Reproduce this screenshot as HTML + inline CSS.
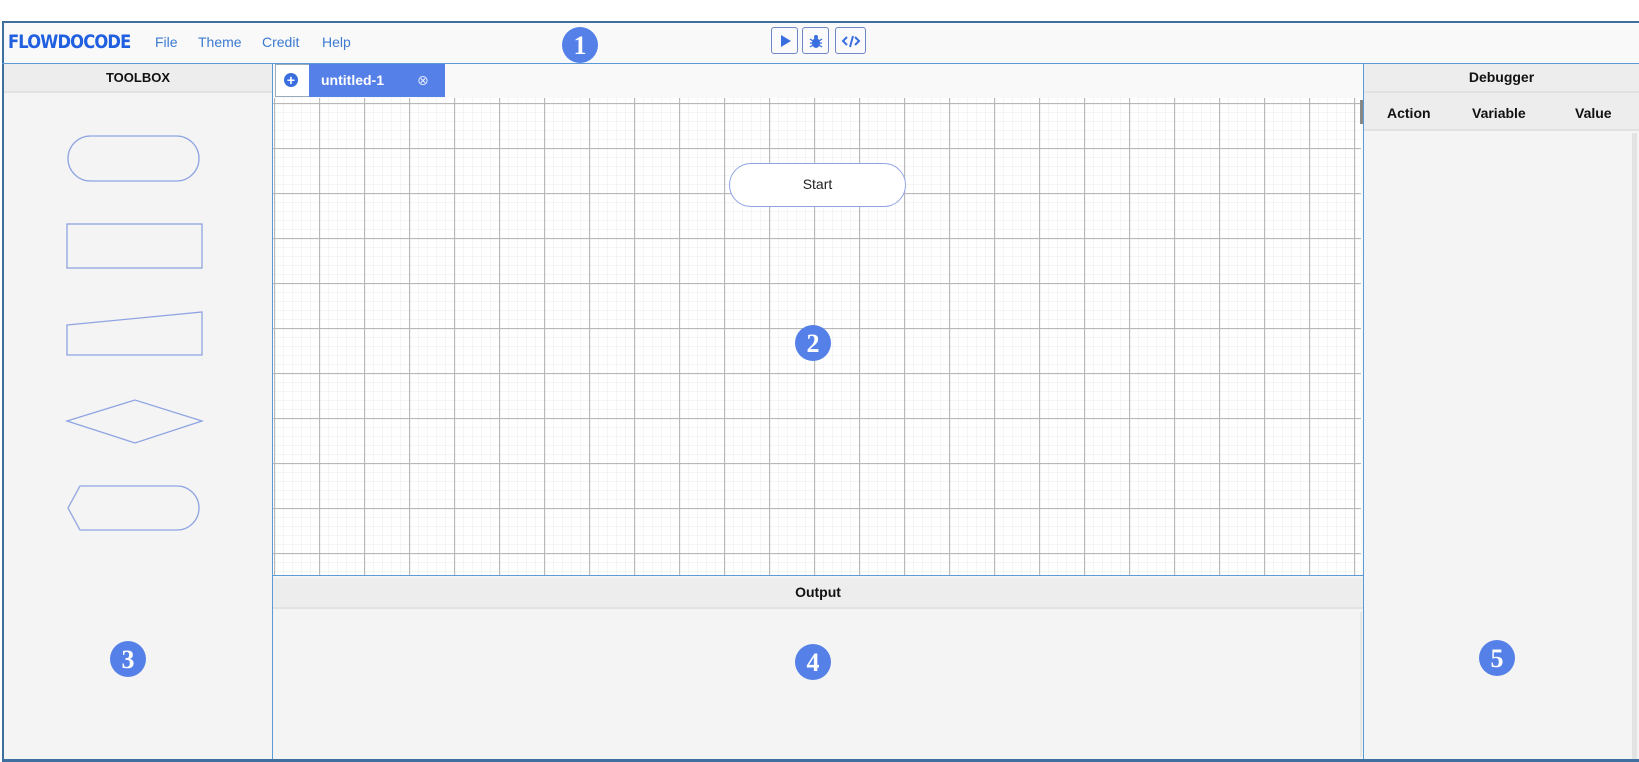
<!DOCTYPE html>
<html><head><meta charset="utf-8"><style>
*{margin:0;padding:0;box-sizing:border-box}
body{width:1639px;height:762px;background:#fff;position:relative;overflow:hidden;font-family:"Liberation Sans","DejaVu Sans",sans-serif}
.a{position:absolute}
.frame{left:2px;top:21px;width:1637px;height:741px;border:2px solid #3f6f9f;border-right:none;background:#f9f9f9}
.menu{top:34px;font-size:14px;color:#3b7bd0}
.hdr{background:#ededed;font-weight:bold;font-size:13px;color:#111;text-align:center;border-bottom:2px solid #e2e2e2}
.btn{top:27px;width:27px;height:27px;border:1px solid #6f86c9;border-radius:3px;background:#fafafa}
.badge{width:36px;height:36px;border-radius:50%;background:#5580e8;color:#fff;font:bold 26px "Liberation Serif",serif;text-align:center;line-height:37px}
</style></head><body>
<div class="a frame"></div>
<div class="a" style="left:8px;top:31px;font:900 19px 'DejaVu Sans',sans-serif;color:#1f5fe0;letter-spacing:-1px;transform:scaleX(0.86);transform-origin:left">FLOWDOCODE</div>
<div class="a menu" style="left:155px">File</div>
<div class="a menu" style="left:198px">Theme</div>
<div class="a menu" style="left:262px">Credit</div>
<div class="a menu" style="left:322px">Help</div>
<div class="a badge" style="left:562px;top:27px">1</div>
<div class="a btn" style="left:771px"><svg width="27" height="27"><path d="M9 7 L19 13 L9 19Z" fill="#3b6fe0"/></svg></div>
<div class="a btn" style="left:802px"><svg width="27" height="27"><g fill="#3b6fe0"><ellipse cx="13" cy="15" rx="4" ry="5"/><circle cx="13" cy="9" r="2"/></g><path d="M7 11l3 2M19 11l-3 2M7 15h3M19 15h-3M7 19l3-2M19 19l-3-2" stroke="#3b6fe0" stroke-width="1.3"/></svg></div>
<div class="a btn" style="left:835px;width:31px"><svg width="31" height="27"><path d="M11 9l-4 4 4 4M19 9l4 4-4 4M17 8l-3 11" stroke="#3b6fe0" stroke-width="2" fill="none"/></svg></div>
<div class="a" style="left:2px;top:63px;width:1637px;height:1px;background:#5b9bd5"></div>
<div class="a" style="left:4px;top:64px;width:268px;height:695px;background:#f4f4f4"></div>
<div class="a hdr" style="left:4px;top:64px;width:268px;height:29px;line-height:27px">TOOLBOX</div>
<div class="a" style="left:272px;top:64px;width:1px;height:698px;background:#5b9bd5"></div>
<svg class="a" style="left:60px;top:130px" width="150" height="410" fill="none" stroke="#8fa4e2" stroke-width="1.3">
<rect x="8" y="6" width="131" height="45" rx="22.5"/>
<rect x="7" y="94" width="135" height="44"/>
<path d="M7 195 L142 182 L142 225 L7 225Z"/>
<path d="M7 291 L75 270 L142 291 L75 313Z"/>
<path d="M20 356 L117 356 A22 22 0 0 1 117 400 L20 400 L8 378Z"/>
</svg>
<div class="a badge" style="left:110px;top:641px">3</div>
<div class="a" style="left:273px;top:64px;width:1090px;height:34px;background:#f9f9f9"></div>
<div class="a" style="left:275px;top:64px;width:35px;height:33px;background:#fff;border:1px solid #9ab;border-right:none"></div>
<div class="a" style="left:284px;top:73px;width:14px;height:14px;border-radius:50%;background:#3b6fe0;color:#fff;font:bold 14px/14px sans-serif;text-align:center">+</div>
<div class="a" style="left:309px;top:64px;width:136px;height:33px;background:#5580e8;color:#fff;font-weight:bold;font-size:14px;line-height:33px;padding-left:12px">untitled-1<span style="position:absolute;left:108px;top:0;font-weight:normal;color:#dfe6fb">⊗</span></div>
<svg class="a" style="left:273px;top:98px" width="1088" height="477">
<defs>
<pattern id="mi" x="1" y="5" width="9" height="9" patternUnits="userSpaceOnUse"><path d="M0 0V9M0 0H9" stroke="#ebebeb" stroke-width="1"/></pattern>
<pattern id="ma" x="1" y="5" width="45" height="45" patternUnits="userSpaceOnUse"><path d="M0.5 0V45M0 0.5H45" stroke="#b8b8b8" stroke-width="1.3"/></pattern>
</defs>
<rect width="1088" height="477" fill="#fff"/>
<rect width="1088" height="477" fill="url(#mi)"/>
<rect width="1088" height="477" fill="url(#ma)"/>
</svg>
<div class="a" style="left:1360px;top:100px;width:3px;height:24px;background:#888"></div>
<div class="a" style="left:729px;top:163px;width:177px;height:44px;border:1.5px solid #8fa4e2;border-radius:22px;background:#fff;text-align:center;line-height:41px;font-size:14px;color:#222">Start</div>
<div class="a badge" style="left:795px;top:325px">2</div>
<div class="a" style="left:273px;top:575px;width:1090px;height:1px;background:#5b9bd5"></div>
<div class="a" style="left:273px;top:576px;width:1090px;height:183px;background:#f4f4f4"></div>
<div class="a hdr" style="left:273px;top:578px;width:1090px;height:31px;line-height:29px;font-size:14px">Output</div>
<div class="a" style="left:1360px;top:612px;width:2px;height:145px;background:#e6e6e6"></div>
<div class="a badge" style="left:795px;top:644px">4</div>
<div class="a" style="left:1363px;top:64px;width:1px;height:698px;background:#5b9bd5"></div>
<div class="a" style="left:1364px;top:64px;width:275px;height:695px;background:#f4f4f4"></div>
<div class="a hdr" style="left:1364px;top:64px;width:275px;height:29px;line-height:27px;font-size:14px">Debugger</div>
<div class="a" style="left:1364px;top:93px;width:275px;height:38px;background:#ededed;border-bottom:2px solid #e2e2e2;font-weight:bold;font-size:14px;color:#111">
<span class="a" style="left:23px;top:12px">Action</span><span class="a" style="left:108px;top:12px">Variable</span><span class="a" style="left:211px;top:12px">Value</span></div>
<div class="a" style="left:1632px;top:133px;width:5px;height:626px;background:#e3e3e3"></div>
<div class="a badge" style="left:1479px;top:640px">5</div>
<div class="a" style="left:2px;top:759px;width:1637px;height:3px;background:#3f6f9f"></div>
</body></html>
